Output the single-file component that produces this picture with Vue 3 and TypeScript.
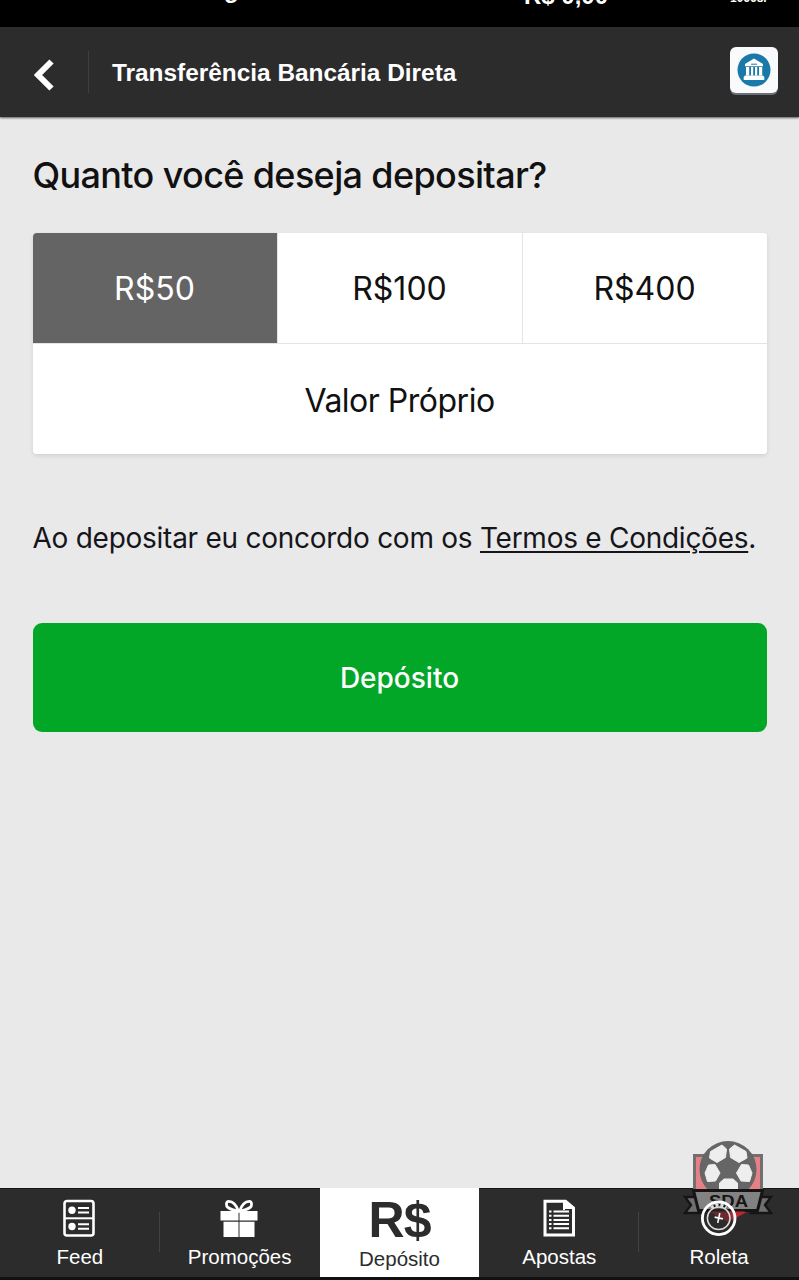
<script setup lang="ts">
import { ref } from 'vue'

const amounts: string[] = ['R$50', 'R$100', 'R$400']
const selected = ref(0)
</script>

<template>
  <div class="screen">
    <div class="status">
      <span class="status-page">g</span>
      <span class="status-balance">R$ 0,00</span>
      <span class="status-user">10668.</span>
    </div>

    <header class="header">
      <svg class="back" width="20" height="32" viewBox="0 0 20 32">
        <path d="M17.500 2.500 4 16l13.500 13.500" fill="none" stroke="#fff" stroke-width="6" />
      </svg>
      <span class="rule"></span>
      <h1 class="title">Transferência Bancária Direta</h1>
      <div class="bank">
        <svg width="34" height="34" viewBox="0 0 34 34">
          <circle cx="17" cy="17" r="16.500" fill="#1a79a8" />
          <g fill="#fff">
            <path d="M17 5.500 26 11v2.300H8V11z" />
            <path d="M9 14h3.200v8.500H9zM14 14h2.200v8.500H14zM18 14h2.200v8.500H18zM22 14h3.200v8.500H22z" />
            <path d="M8 22.500h18l1.300 1.500v3H6.700v-3z" />
          </g>
          <path d="M14 11.200h6" stroke="#1a79a8" stroke-width="1" />
        </svg>
      </div>
    </header>

    <main class="content">
      <h2 class="question">Quanto você deseja depositar?</h2>
      <div class="amounts">
        <div class="amount-row">
          <button
            v-for="(amount, i) in amounts"
            :key="amount"
            class="amount"
            :class="{ active: i === selected }"
            @click="selected = i"
          >{{ amount }}</button>
        </div>
        <button class="custom">Valor Próprio</button>
      </div>
      <p class="terms">Ao depositar eu concordo com os <a>Termos e Condições</a>.</p>
      <button class="submit">Depósito</button>
    </main>

    <nav class="nav">
      <div class="tab">
        <svg class="icon" width="40" height="40" viewBox="0 0 40 40">
          <rect x="5.500" y="2" width="29" height="34.500" rx="2.500" fill="none" stroke="#fff" stroke-width="2.600" />
          <path d="M5 19.300h30" stroke="#fff" stroke-width="2" />
          <circle cx="13" cy="11.300" r="3.700" fill="#fff" />
          <circle cx="13" cy="27.500" r="3.700" fill="#fff" />
          <path d="M19 9h11M19 13.500h11M19 25.300h11M19 29.800h11" stroke="#fff" stroke-width="2" />
        </svg>
        <span class="label">Feed</span>
      </div>
      <div class="tab ruled">
        <svg class="icon" width="40" height="40" viewBox="0 0 40 40">
          <path d="M1.500 12H19.500v9.500H1.500zM20.500 12h18v9.500h-18zM4.500 22.800H19.500V38H4.500zM20.500 22.800h15V38h-15z" fill="#fff" />
          <path d="M19.300 12C17 5 13.500 2.300 9.800 2.300 6.800 2.300 6.800 7 9 8.500 12 10.700 16 11.500 19.300 12zM20.700 12C23 5 26.500 2.300 30.200 2.300 33.200 2.300 33.200 7 31 8.500 28 10.700 24 11.500 20.700 12z" fill="none" stroke="#fff" stroke-width="2.800" />
        </svg>
        <span class="label">Promoções</span>
      </div>
      <div class="tab current">
        <span class="currency">R$</span>
        <span class="label">Depósito</span>
      </div>
      <div class="tab">
        <svg class="icon" width="40" height="40" viewBox="0 0 40 40">
          <path d="M6 2.200h20.500L34.500 9v27H6z" fill="none" stroke="#fff" stroke-width="3" />
          <path d="M25 1v9h10z" fill="#fff" />
          <path d="M25 1v10" stroke="#fff" stroke-width="2" />
          <path d="M10 12.500h2.500M14.500 12.500H30M10 16.700h2.500M14.500 16.700H30M10 20.900h2.500M14.500 20.900H30M10 25.100h2.500M14.500 25.100H30M10 29.300h2.500M14.500 29.300H30" stroke="#fff" stroke-width="2" />
        </svg>
        <span class="label">Apostas</span>
      </div>
      <div class="tab ruled">
        <div class="icon-space"></div>
        <span class="label">Roleta</span>
      </div>
    </nav>

    <svg class="badge" width="100" height="106" viewBox="0 0 100 106">
      <path d="M14.500 20.500h67v36h-67z" fill="#e77f86" stroke="#707071" stroke-width="3" />
      <path d="M29 76h40L48 87z" fill="#ba2831" />
      <circle cx="48" cy="34.500" r="28.500" fill="#666667" />
      <g fill="#eeeeef" stroke="#eeeeef" stroke-width="1" stroke-linejoin="round">
        <path d="m30.500 16.500 11.500-6.500 4.500 4-1 8.500-8.500 5-7.500-4.500z" />
        <path d="m66 16.500-11.500-6.500-5 4 1 8.500 8.500 5 8-4.500z" />
        <path d="m28.500 30 6.500-.5 5 8.500-4.500 8-8 .5-2.500-8.500z" />
        <path d="m68.500 30-7-.5-5 8.500 4.500 8 8.500.5 2.500-8.500z" />
        <path d="m39.500 48 4.500-4h9l4.500 4v6h-18z" />
      </g>
      <path d="M5 62h14l6 16H5l6-8zM91 62H77l-6 16h20l-6-8z" fill="#6f6f6f" stroke="#151515" stroke-width="2.400" />
      <path d="M13.500 55.500h69L77.500 75.500H18.500z" fill="#828282" stroke="#151515" stroke-width="3" />
      <path d="M31 76.500h34L48 86z" fill="#ba2831" />
      <text x="48.500" y="72" text-anchor="middle" textLength="39" lengthAdjust="spacingAndGlyphs" class="badge-text">SDA</text>
      <circle cx="38.700" cy="84" r="13" fill="#2c2c2c" fill-opacity="0.550" />
      <g fill="none" stroke="#fff">
        <circle cx="38.700" cy="83.300" r="16.300" stroke-width="2.800" />
        <circle cx="38.700" cy="83.300" r="11.300" stroke="#ddd" stroke-width="1.500" />
        <path d="M38.700 78v10M34.500 83h8.400" stroke-width="1.600" transform="rotate(12 38.700 83.300)" />
        <path d="M31 72.500a13.500 13.500 0 0 1 15.400 0" stroke="#ddd" stroke-width="3" stroke-dasharray="3 2" />
      </g>
    </svg>
  </div>
</template>

<style>
body {
  margin: 0;
  background: #e9e9ea;
}
</style>

<style scoped>
.screen {
  position: relative;
  display: flex;
  flex-direction: column;
  width: 799px;
  height: 1280px;
  overflow: hidden;
  background: #e9e9ea;
  font-family: Inter, "Liberation Sans", sans-serif;
}
button {
  display: flex;
  align-items: center;
  justify-content: center;
  margin: 0;
  padding: 0;
  border: 0;
  font-family: inherit;
}
.status {
  position: relative;
  flex: none;
  height: 27px;
  overflow: hidden;
  background: #000;
  color: #fff;
  font-family: "Liberation Sans", Arial, sans-serif;
  font-weight: 700;
  white-space: pre;
}
.status span {
  position: absolute;
  line-height: 24px;
}
.status-page {
  left: 224px;
  top: -22px;
  font-size: 24px;
}
.status-balance {
  left: 524px;
  top: -16px;
  font-size: 24px;
}
.status-user {
  left: 730px;
  top: -14px;
  font-size: 12px;
}
.header {
  display: flex;
  flex: none;
  align-items: center;
  height: 90px;
  box-sizing: border-box;
  padding: 0 21px 0 34px;
  background: #2c2c2c;
  box-shadow: 0 1px 2px rgba(0, 0, 0, 0.6);
}
.back {
  margin-top: 6px;
}
.rule {
  width: 1px;
  height: 42px;
  margin: 0 23px 0 34px;
  background: #3e3e3e;
}
.title {
  margin: 2px 0 0;
  color: #fff;
  font: 700 24.400px/30px "Liberation Sans", Arial, sans-serif;
  white-space: nowrap;
}
.bank {
  display: flex;
  align-items: center;
  justify-content: center;
  width: 48.500px;
  height: 46px;
  margin: -4px 0 0 auto;
  border-radius: 6px;
  background: #f8fafc;
  box-shadow: 0 2px 0 #6c7074;
}
.content {
  flex: 1;
  padding: 36px 33px 0 32.500px;
}
.question {
  height: 44px;
  margin: 0 0 36px;
  color: #111;
  font-size: 36px;
  font-weight: 500;
  line-height: 44px;
  letter-spacing: -0.640px;
  white-space: nowrap;
}
.amounts {
  width: 734px;
  overflow: hidden;
  border-radius: 4px;
  background: #fff;
  box-shadow: 0 2px 4px rgba(0, 0, 0, 0.1);
}
.amount-row {
  display: flex;
  height: 110px;
  border-bottom: 1px solid #e4e4e5;
}
.amount {
  flex: 1;
  border-right: 1px solid #e4e4e5;
  background: #fff;
  color: #111;
  font-size: 32px;
}
.amount:last-child {
  border-right: 0;
}
.amount.active {
  background: #646464;
  color: #fff;
}
.custom {
  width: 100%;
  height: 110px;
  padding-top: 3px;
  background: #fff;
  color: #111;
  font-size: 32px;
  letter-spacing: -0.500px;
}
.terms {
  height: 36px;
  margin: 66px 0 67px;
  color: #15151a;
  font-size: 28px;
  line-height: 36px;
  letter-spacing: -0.260px;
  white-space: nowrap;
}
.terms a {
  text-decoration: underline;
  text-decoration-thickness: 2px;
  text-underline-offset: 3px;
}
.submit {
  width: 734px;
  height: 109px;
  border-radius: 9px;
  background: #02a727;
  color: #fff;
  font-size: 28px;
  font-weight: 500;
}
.nav {
  display: flex;
  flex: none;
  height: 89px;
  border-bottom: 3px solid #111;
  background: #2c2c2c;
  box-shadow: inset 0 1px 0 #171717;
  color: #fff;
  font-family: "Liberation Sans", Arial, sans-serif;
}
.tab {
  position: relative;
  display: flex;
  flex: 1;
  flex-direction: column;
  align-items: center;
  padding-top: 11px;
}
.tab.ruled::before {
  content: "";
  position: absolute;
  left: -1px;
  top: 24px;
  width: 1px;
  height: 40px;
  background: #424242;
}
.icon {
  flex: none;
  margin-left: -1px;
}
.icon-space {
  flex: none;
  height: 40px;
}
.label {
  margin-top: 6px;
  font-size: 20.500px;
  line-height: 24px;
}
.current {
  background: #fff;
  color: #2c2c2c;
}
.currency {
  height: 42px;
  font-size: 50px;
  font-weight: 700;
  line-height: 42px;
  letter-spacing: -1px;
}
.badge {
  position: absolute;
  left: 680px;
  top: 1135px;
}
.badge-text {
  fill: #151515;
  font: 700 17px "Liberation Sans", Arial, sans-serif;
}
</style>
